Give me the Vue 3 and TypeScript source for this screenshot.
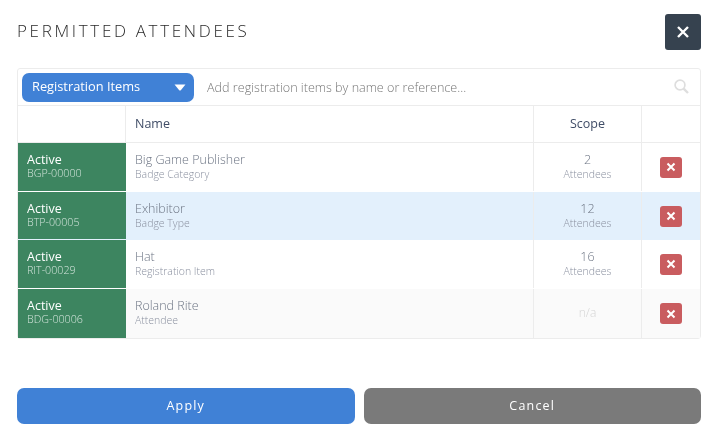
<template>
  <div class="modal">
    <header class="top">
      <h1 class="title">PERMITTED ATTENDEES</h1>
      <button class="btn-close" aria-label="Close">
        <svg width="14" height="14" viewBox="0 0 14 14"><path d="M2 2 L12 12 M12 2 L2 12" stroke="#fff" stroke-width="2.4" /></svg>
      </button>
    </header>

    <div class="panel">
      <div class="search-row">
        <button class="type-select">
          <span class="type-label">Registration Items</span>
          <svg width="12" height="7" viewBox="0 0 12 7"><path d="M0.5 0.5 H11.5 L7 6 Q6 7 5 6 Z" fill="#fff" /></svg>
        </button>
        <span class="placeholder">Add registration items by name or reference...</span>
        <svg class="search-icon" width="15" height="15" viewBox="0 0 15 15" fill="none">
          <circle cx="6" cy="6" r="4.9" stroke="#dedede" stroke-width="1.7" />
          <path d="M9.6 9.6 L14 14" stroke="#dedede" stroke-width="2.4" />
        </svg>
      </div>

      <div class="row head">
        <div class="cell status"></div>
        <div class="cell name">Name</div>
        <div class="cell scope">Scope</div>
        <div class="cell action"></div>
      </div>

      <div v-for="item in items" :key="item.code" class="row item" :class="item.tone">
        <div class="cell status">
          <div class="state">Active</div>
          <div class="code">{{ item.code }}</div>
        </div>
        <div class="cell name">
          <div class="main">{{ item.name }}</div>
          <div class="sub">{{ item.kind }}</div>
        </div>
        <div class="cell scope">
          <template v-if="item.count !== null">
            <div class="main">{{ item.count }}</div>
            <div class="sub">Attendees</div>
          </template>
          <div v-else class="na">n/a</div>
        </div>
        <div class="cell action">
          <button class="btn-remove" aria-label="Remove">
            <svg width="10" height="10" viewBox="0 0 10 10"><path d="M1.5 1.5 L8.5 8.5 M8.5 1.5 L1.5 8.5" stroke="#fff" stroke-width="2" /></svg>
          </button>
        </div>
      </div>
    </div>

    <footer class="actions">
      <button class="btn apply">Apply</button>
      <button class="btn cancel">Cancel</button>
    </footer>
  </div>
</template>

<script setup lang="ts">
interface Item { code: string; name: string; kind: string; count: number | null; tone: string }

const items: Item[] = [
  { code: 'BGP-00000', name: 'Big Game Publisher', kind: 'Badge Category', count: 2, tone: '' },
  { code: 'BTP-00005', name: 'Exhibitor', kind: 'Badge Type', count: 12, tone: 'blue' },
  { code: 'RIT-00029', name: 'Hat', kind: 'Registration Item', count: 16, tone: '' },
  { code: 'BDG-00006', name: 'Roland Rite', kind: 'Attendee', count: null, tone: 'grey' },
]
</script>

<style>
html, body { background: #fff; }
</style>

<style scoped>
.modal {
  width: 717px;
  height: 440px;
  box-sizing: border-box;
  padding: 14px 16px 0 17px;
  font-family: "Open Sans", "Noto Sans", sans-serif;
  display: flex;
  flex-direction: column;
  will-change: transform;
}
.top {
  display: flex;
  justify-content: space-between;
  align-items: flex-start;
  height: 54px;
}
.title {
  margin: 5px 0 0;
  font-size: 17px;
  line-height: 24px;
  font-weight: 300;
  letter-spacing: 2.67px;
  color: #2a2a2a;
}
.btn-close {
  width: 36px;
  height: 36px;
  border: none;
  border-radius: 3px;
  background: #36424f;
  padding: 0;
  display: flex;
  align-items: center;
  justify-content: center;
}
.panel {
  width: 684px;
  box-sizing: border-box;
  border: 1px solid #ececec;
  border-radius: 3px;
}
.search-row {
  height: 36px;
  display: flex;
  align-items: center;
  padding: 0 11px 0 4px;
  border-bottom: 1px solid #ececec;
  box-sizing: content-box;
}
.search-icon { margin-top: -2px; }
.type-select {
  width: 172px;
  height: 29px;
  margin-top: 1px;
  border: none;
  border-radius: 7px;
  background: #4081d6;
  color: #fff;
  font: 400 12.8px "Open Sans", sans-serif;
  padding: 0 8px 0 10px;
  display: flex;
  align-items: center;
  justify-content: space-between;
}
.type-label { margin-top: -3px; }
.placeholder {
  margin-left: 13px;
  flex: 1;
  font-size: 12.6px;
  font-weight: 300;
  color: #777;
}
.row {
  display: grid;
  grid-template-columns: 108px 408px 108px 1fr;
}
.head { height: 36px; border-bottom: 1px solid #ececec; box-sizing: content-box; }
.head .name, .head .scope { color: #3f4c66; font-size: 12.5px; }
.cell {
  display: flex;
  flex-direction: column;
  justify-content: center;
  box-sizing: border-box;
  padding-bottom: 2px;
  border-right: 1px solid #ececec;
}
.cell.action { border-right: none; align-items: center; padding-bottom: 0; }
.head .name { padding-left: 9px; }
.cell.scope { align-items: center; }
.item { height: 48px; margin-bottom: 1px; }
.item.blue { margin-bottom: 0; background: #e3f0fc; }
.item.blue .status { margin-bottom: 1px; }
.item.grey { height: 49px; margin-bottom: 0; background: #fafafa; }
.item.grey .cell:not(.action) { padding-bottom: 3px; }
.item .status {
  background: #3d8560;
  border-right: none;
  padding-left: 9px;
  color: #fff;
}
.state { font-size: 12.5px; line-height: 15px; }
.code { font-size: 10.7px; font-weight: 300; line-height: 13px; color: #d3e4db; }
.item .name { padding-left: 9px; }
.main { font-size: 12.5px; font-weight: 300; line-height: 15px; color: #6d7584; }
.sub { font-size: 10.5px; font-weight: 300; line-height: 14px; color: #8b91a0; }
.na { font-size: 12px; font-weight: 300; color: #d5d5d5; }
.btn-remove {
  width: 22px;
  height: 21px;
  border: none;
  border-radius: 3px;
  background: #c95c5f;
  padding: 0;
  display: flex;
  align-items: center;
  justify-content: center;
}
.actions {
  margin-top: 49px;
  display: flex;
  gap: 9px;
  width: 684px;
}
.btn {
  flex: 1;
  height: 36px;
  border: none;
  border-radius: 7px;
  color: #fff;
  font: 400 12.5px "Open Sans", sans-serif;
  letter-spacing: 1.2px;
  padding: 0 0 2px;
}
.apply { background: #4081d6; }
.cancel { background: #7a7a7a; }
</style>
